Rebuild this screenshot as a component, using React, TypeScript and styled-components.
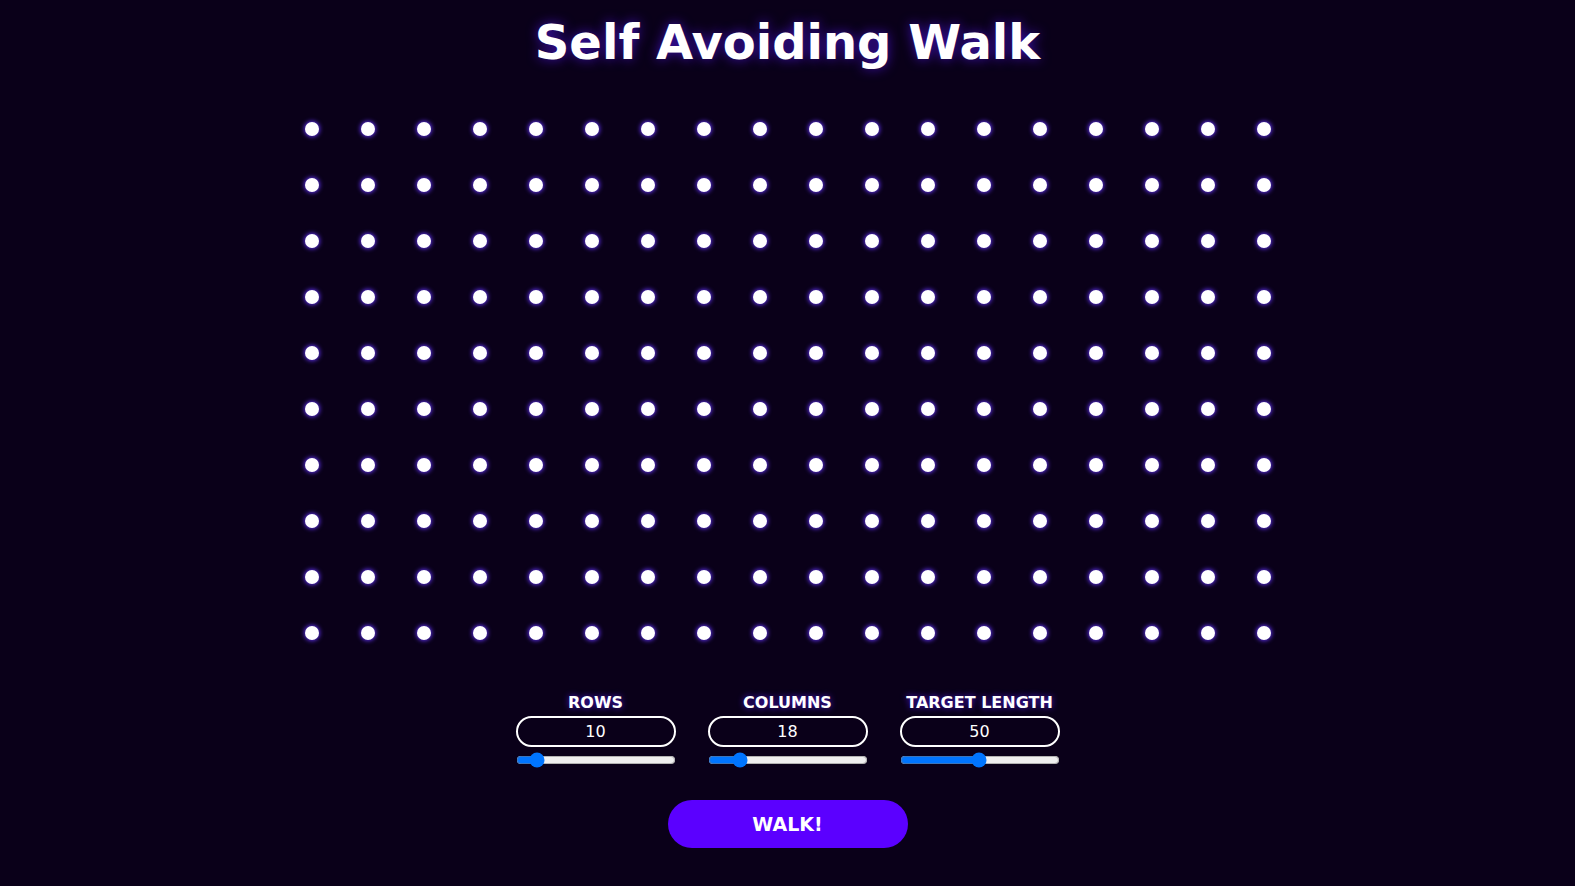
import React, { useState } from "react";
import styled, { createGlobalStyle } from "styled-components";

const GlobalStyle = createGlobalStyle`
  html, body {
    margin: 0;
    padding: 0;
    background: #0a0019;
  }
  body {
    font-family: "DejaVu Sans", Verdana, sans-serif;
    color: #ffffff;
  }
`;

const Page = styled.div`
  display: flex;
  flex-direction: column;
  align-items: center;
  min-height: 100vh;
`;

const Title = styled.h1`
  margin: 12px 0 0;
  font-size: 48px;
  line-height: 60px;
  font-weight: 700;
  color: #ffffff;
  text-shadow: 0 0 12px #3d10b0;
`;

const Board = styled.div<{ $cols: number }>`
  display: grid;
  grid-template-columns: repeat(${(p) => p.$cols}, 56px);
  grid-auto-rows: 56px;
  margin-top: 29px;
`;

const Cell = styled.div`
  display: flex;
  align-items: center;
  justify-content: center;
`;

const Dot = styled.span`
  width: 14px;
  height: 14px;
  border-radius: 50%;
  background: #ffffff;
  box-shadow: 0 0 4px 1px #5a2ee0;
`;

const Controls = styled.div`
  display: flex;
  gap: 32px;
  margin-top: 32px;
`;

const Control = styled.label`
  display: flex;
  flex-direction: column;
  align-items: center;
  width: 160px;
`;

const Label = styled.span`
  font-size: 16px;
  line-height: 20px;
  font-weight: 700;
  text-shadow: 0 0 6px #4a18d0;
`;

const NumberBox = styled.input`
  box-sizing: border-box;
  width: 160px;
  height: 31px;
  margin-top: 3px;
  border: 2px solid #ffffff;
  border-radius: 16px;
  background: transparent;
  color: #ffffff;
  font-family: "DejaVu Sans", Verdana, sans-serif;
  font-size: 16px;
  text-align: center;
  outline: none;
  -moz-appearance: textfield;
  &::-webkit-outer-spin-button,
  &::-webkit-inner-spin-button {
    -webkit-appearance: none;
    margin: 0;
  }
`;

const Slider = styled.input`
  width: 160px;
  height: 16px;
  margin: 5px 0 0;
  accent-color: #0075ff;
`;

const WalkButton = styled.button`
  margin-top: 32px;
  width: 240px;
  height: 48px;
  border: none;
  border-radius: 24px;
  background: #5b00ff;
  color: #ffffff;
  font-family: "DejaVu Sans", Verdana, sans-serif;
  font-size: 19px;
  font-weight: 700;
  cursor: pointer;
`;

type Setting = { key: string; label: string };

const settings: Setting[] = [
  { key: "rows", label: "ROWS" },
  { key: "cols", label: "COLUMNS" },
  { key: "length", label: "TARGET LENGTH" },
];

export default function App() {
  const [values, setValues] = useState<Record<string, number>>({
    rows: 10,
    cols: 18,
    length: 50,
  });

  const update = (key: string, v: string) =>
    setValues((prev) => ({ ...prev, [key]: Number(v) }));

  const cells = Array.from({ length: values.rows * values.cols });

  return (
    <Page>
      <GlobalStyle />
      <Title>Self Avoiding Walk</Title>
      <Board $cols={values.cols}>
        {cells.map((_, i) => (
          <Cell key={i}>
            <Dot />
          </Cell>
        ))}
      </Board>
      <Controls>
        {settings.map((s) => (
          <Control key={s.key}>
            <Label>{s.label}</Label>
            <NumberBox
              type="number"
              value={values[s.key]}
              onChange={(e) => update(s.key, e.target.value)}
            />
            <Slider
              type="range"
              min={1}
              max={100}
              value={values[s.key]}
              onChange={(e) => update(s.key, e.target.value)}
            />
          </Control>
        ))}
      </Controls>
      <WalkButton>WALK!</WalkButton>
    </Page>
  );
}
